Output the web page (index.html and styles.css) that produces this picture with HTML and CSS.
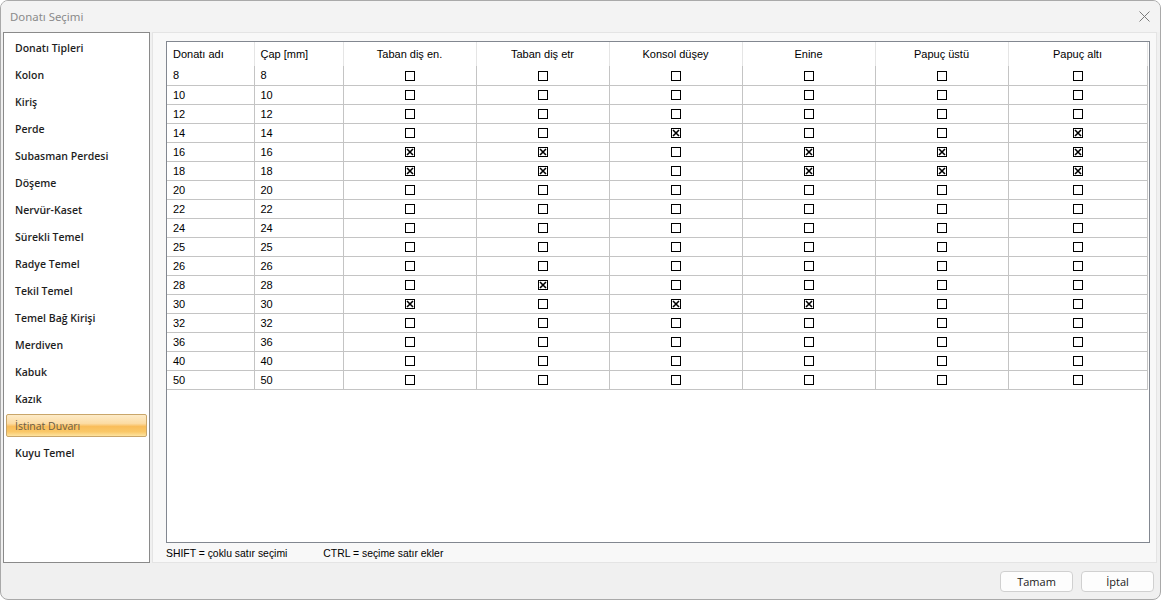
FILE: index.html
```html
<!DOCTYPE html>
<html lang="tr">
<head>
    <meta charset="UTF-8">
    <title>Donatı Seçimi</title>
    <link rel="stylesheet" href="styles.css">
</head>
<body>
<div class="window">
    <div class="titlebar">
        <span class="title">Donatı Seçimi</span>
        <span class="close">
            <svg width="11" height="11" viewBox="0 0 11 11"><path d="M0.5 0.5 L10.5 10.5 M10.5 0.5 L0.5 10.5" stroke="#7a7a7a" stroke-width="1" fill="none"/></svg>
        </span>
    </div>

    <div class="content">
        <ul class="side-list">
            <li>Donatı Tipleri</li>
            <li>Kolon</li>
            <li>Kiriş</li>
            <li>Perde</li>
            <li>Subasman Perdesi</li>
            <li>Döşeme</li>
            <li>Nervür-Kaset</li>
            <li>Sürekli Temel</li>
            <li>Radye Temel</li>
            <li>Tekil Temel</li>
            <li>Temel Bağ Kirişi</li>
            <li>Merdiven</li>
            <li>Kabuk</li>
            <li>Kazık</li>
            <li class="selected">İstinat Duvarı</li>
            <li>Kuyu Temel</li>
        </ul>

        <div class="main">
            <div class="grid-box">
                <table class="grid">
                    <colgroup>
                        <col class="c-name">
                        <col class="c-cap">
                        <col class="c-chk"><col class="c-chk"><col class="c-chk"><col class="c-chk"><col class="c-chk">
                        <col class="c-last">
                    </colgroup>
                    <thead>
                        <tr>
                            <th class="left">Donatı adı</th>
                            <th class="left">Çap [mm]</th>
                            <th>Taban diş en.</th>
                            <th>Taban diş etr</th>
                            <th>Konsol düşey</th>
                            <th>Enine</th>
                            <th>Papuç üstü</th>
                            <th>Papuç altı</th>
                        </tr>
                    </thead>
                    <tbody id="gridBody"></tbody>
                </table>
            </div>
            <div class="hints">
                <span>SHIFT = çoklu satır seçimi</span>
                <span>CTRL = seçime satır ekler</span>
            </div>
        </div>
    </div>

    <div class="footer">
        <button class="btn">Tamam</button>
        <button class="btn">İptal</button>
    </div>
</div>

<script>
    // [çap, taban en, taban etr, konsol, enine, papuç üstü, papuç altı]
    const rows = [
        [8, 0, 0, 0, 0, 0, 0],
        [10, 0, 0, 0, 0, 0, 0],
        [12, 0, 0, 0, 0, 0, 0],
        [14, 0, 0, 1, 0, 0, 1],
        [16, 1, 1, 0, 1, 1, 1],
        [18, 1, 1, 0, 1, 1, 1],
        [20, 0, 0, 0, 0, 0, 0],
        [22, 0, 0, 0, 0, 0, 0],
        [24, 0, 0, 0, 0, 0, 0],
        [25, 0, 0, 0, 0, 0, 0],
        [26, 0, 0, 0, 0, 0, 0],
        [28, 0, 1, 0, 0, 0, 0],
        [30, 1, 0, 1, 1, 0, 0],
        [32, 0, 0, 0, 0, 0, 0],
        [36, 0, 0, 0, 0, 0, 0],
        [40, 0, 0, 0, 0, 0, 0],
        [50, 0, 0, 0, 0, 0, 0]
    ];

    const boxOff = '<svg class="chk" width="10" height="10" viewBox="0 0 10 10"><rect x="0.5" y="0.5" width="9" height="9" fill="#fff" stroke="#000"/></svg>';
    const boxOn = '<svg class="chk" width="10" height="10" viewBox="0 0 10 10"><rect x="0.5" y="0.5" width="9" height="9" fill="#fff" stroke="#000"/><path d="M2 2 L8 8 M8 2 L2 8" stroke="#000" stroke-width="1.6"/></svg>';

    const body = document.getElementById('gridBody');
    rows.forEach(r => {
        const tr = document.createElement('tr');
        let html = `<td class="left">${r[0]}</td><td class="left">${r[0]}</td>`;
        for (let i = 1; i < r.length; i++) {
            html += `<td>${r[i] ? boxOn : boxOff}</td>`;
        }
        tr.innerHTML = html;
        body.appendChild(tr);
    });
</script>
</body>
</html>
```

FILE: styles.css
```css
* {
    box-sizing: border-box;
}
body {
    margin: 0;
    background-color: #ffffff;
    font-family: "Liberation Sans", Arial, sans-serif;
}
.window {
    width: 1161px;
    height: 600px;
    border: 1px solid #a9a9a9;
    border-radius: 8px;
    background-color: #f0f0f0;
    display: flex;
    flex-direction: column;
    overflow: hidden;
}
.titlebar {
    height: 31px;
    flex: none;
    display: flex;
    align-items: center;
    justify-content: space-between;
    padding: 0 10px 0 9px;
    background-color: #f3f3f3;
}
.title {
    font-family: "Noto Sans", sans-serif;
    font-size: 11.4px;
    color: #8a8a8a;
}
.close {
    display: flex;
}
.content {
    height: 531px;
    flex: none;
    display: flex;
    padding: 0 3px 0 2px;
}
.side-list {
    width: 147px;
    height: 531px;
    margin: 0;
    padding: 3px 1px 0;
    list-style: none;
    background-color: #ffffff;
    border: 1px solid #8a8a8a;
    display: flex;
    flex-direction: column;
    gap: 4px;
}
.side-list li {
    height: 23px;
    margin: 0 1px;
    padding-left: 8px;
    display: flex;
    align-items: center;
    font-family: "Open Sans", sans-serif;
    font-size: 10.5px;
    font-weight: 600;
    color: #1e1e1e;
    border: 1px solid transparent;
    border-radius: 2px;
}
.side-list li.selected {
    color: #6a5c44;
    font-weight: 500;
    border-color: #c9a66a;
    background: linear-gradient(to bottom, #fdebc8 0%, #fcdca4 40%, #f9bd5a 55%, #fac868 80%, #fde3a0 100%);
}
.main {
    flex: 1;
    margin-left: 2px;
    height: 531px;
    background-color: #f8f8f8;
    border: 1px solid #e4e4e4;
    padding: 8px 6px 0 13px;
    display: flex;
    flex-direction: column;
}
.grid-box {
    height: 502px;
    background-color: #ffffff;
    border: 1px solid #828790;
}
.grid {
    border-collapse: collapse;
    table-layout: fixed;
    width: 980px;
    font-size: 11px;
    color: #000;
}
.c-name { width: 87px; }
.c-cap { width: 89px; }
.c-chk { width: 133px; }
.c-last { width: 139px; }
.grid th {
    height: 24px;
    font-weight: normal;
    text-align: center;
    border-right: 1px solid #e5e5e5;
    padding: 0;
}
.grid td {
    height: 19px;
    padding: 0;
    text-align: center;
    border-right: 1px solid #c4c4c4;
    border-bottom: 1px solid #c4c4c4;
    line-height: 12px;
}
.grid th.left,
.grid td.left {
    text-align: left;
    padding-left: 6px;
}
.chk {
    display: block;
    margin: 1px auto 0;
}
.hints {
    margin-top: 4px;
    font-size: 10.4px;
    color: #000;
    display: flex;
    gap: 36px;
    line-height: 14px;
}
.footer {
    flex: 1;
    display: flex;
    justify-content: flex-end;
    gap: 8px;
    padding: 8px 6px 0 0;
}
.btn {
    width: 73px;
    height: 21px;
    background-color: #fdfdfd;
    border: 1px solid #d0d0d0;
    border-radius: 4px;
    font-family: "Open Sans", sans-serif;
    font-size: 11px;
    color: #1a1a1a;
    padding: 0;
}
```
